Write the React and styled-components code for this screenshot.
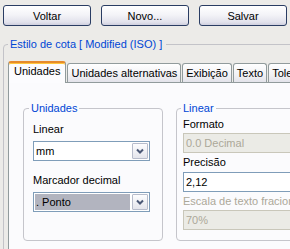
import React from 'react';
import styled, { createGlobalStyle, css } from 'styled-components';

const GlobalStyle = createGlobalStyle`
  body {
    margin: 0;
    background: #ecebe8;
    font-family: "Liberation Sans", Arial, sans-serif;
    font-size: 11px;
    line-height: 14px;
  }
`;

const Window = styled.div`
  width: 290px;
  height: 249px;
  overflow: hidden;
  background: #ecebe8;
  color: #000;
`;

const Toolbar = styled.div`
  display: flex;
  gap: 10px;
  padding: 5px 3px 0;
`;

const Button = styled.button`
  box-sizing: border-box;
  width: 88px;
  height: 21px;
  padding: 0;
  border: 1px solid #2a3d63;
  border-radius: 3px;
  background: linear-gradient(#ffffff 0%, #f4f4f8 45%, #e2e2ec 85%, #cfcfde 100%);
  font: inherit;
  color: #000;
`;

const StyleGroup = styled.fieldset`
  box-sizing: border-box;
  width: 340px;
  height: 260px;
  margin: 11px 0 0 3px;
  padding: 10px 0 0 4px;
  border: 1px solid #c3c3c8;
  border-radius: 4px;
`;

const GroupTitle = styled.legend`
  padding: 0 4px 0 2px;
  color: #0046d5;
`;

const TabStrip = styled.div`
  position: relative;
  z-index: 1;
  display: flex;
  align-items: flex-end;
  gap: 1px;
  height: 22px;
  margin-bottom: -1px;
`;

const Tab = styled.div`
  box-sizing: border-box;
  height: 19px;
  margin-bottom: 1px;
  padding: 2px 3px 0;
  border: 1px solid #919b9c;
  border-bottom: none;
  border-radius: 3px 3px 0 0;
  background: linear-gradient(#ffffff, #f1f1f4 60%, #e3e3ea);
  white-space: nowrap;

  ${p => p.$active && css`
    height: 22px;
    margin-bottom: 0;
    padding: 1px 5px 0;
    border-top: 2px solid #e68b2c;
    box-shadow: inset 0 1px 0 #ffc73c;
    background: #fcfcfe;
  `}
`;

const TabPanel = styled.div`
  display: flex;
  gap: 13px;
  height: 200px;
  padding: 18px 0 0 14px;
  border: 1px solid #919b9c;
  background: #fbfbfd;
`;

const Section = styled.fieldset`
  box-sizing: border-box;
  flex: none;
  width: ${p => p.$width}px;
  height: 140px;
  margin: 0;
  padding: 0 6px 0 ${p => p.$pad}px;
  border: 1px solid #c5c5cb;
  border-radius: 4px;
`;

const SectionTitle = styled.legend`
  padding: 0 2px;
  color: #0046d5;
`;

const Fields = styled.div`
  display: flex;
  flex-direction: column;
  padding-left: ${p => p.$indent}px;
`;

const Label = styled.div`
  margin-top: ${p => p.$top}px;
  color: ${p => (p.$disabled ? '#aca899' : '#000')};
  white-space: nowrap;
`;

const Field = styled.div`
  box-sizing: border-box;
  display: flex;
  align-items: center;
  width: ${p => p.$width}px;
  height: 20px;
  margin-top: ${p => p.$top}px;
  padding: 1px;
  border: 1px solid ${p => (p.$disabled ? '#c9c7ba' : '#7f9db9')};
  background: ${p => (p.$disabled ? '#ebebe6' : '#fff')};
  color: ${p => (p.$disabled ? '#aca899' : '#000')};
  white-space: nowrap;
`;

const Value = styled.div`
  flex: 1;
  align-self: stretch;
  display: flex;
  align-items: center;
  padding-left: 1px;
  background: ${p => (p.$selected ? '#b2b4bf' : 'transparent')};
`;

const DropButton = styled.div`
  box-sizing: border-box;
  display: flex;
  align-items: center;
  justify-content: center;
  width: 16px;
  height: 16px;
  margin-left: 2px;
  border: 1px solid #b7bccb;
  border-radius: 1px;
  background: linear-gradient(#fdfdfe, #e4e5ec);
`;

const Chevron = () => (
  <svg width="8" height="6" viewBox="0 0 8 6">
    <polyline points="1,1.5 4,4.5 7,1.5" fill="none" stroke="#4b5876" strokeWidth="2" />
  </svg>
);

const Combo = ({ value, selected, top }) => (
  <Field $width={117} $top={top}>
    <Value $selected={selected}>{value}</Value>
    <DropButton>
      <Chevron />
    </DropButton>
  </Field>
);

export default function App() {
  return (
    <Window>
      <GlobalStyle />
      <Toolbar>
        <Button>Voltar</Button>
        <Button>Novo...</Button>
        <Button>Salvar</Button>
      </Toolbar>

      <StyleGroup>
        <GroupTitle>Estilo de cota [ Modified (ISO) ]</GroupTitle>
        <TabStrip>
          <Tab $active>Unidades</Tab>
          <Tab>Unidades alternativas</Tab>
          <Tab>Exibição</Tab>
          <Tab>Texto</Tab>
          <Tab>Tolerâncias</Tab>
        </TabStrip>
        <TabPanel>
          <Section $width={140} $pad={5}>
            <SectionTitle>Unidades</SectionTitle>
            <Fields $indent={4}>
              <Label $top={7}>Linear</Label>
              <Combo value="mm" top={5} />
              <Label $top={12}>Marcador decimal</Label>
              <Combo value=". Ponto" selected top={5} />
            </Fields>
          </Section>
          <Section $width={150} $pad={4}>
            <SectionTitle>Linear</SectionTitle>
            <Fields $indent={2}>
              <Label $top={2}>Formato</Label>
              <Field $width={130} $top={2} $disabled>
                <Value>0.0 Decimal</Value>
              </Field>
              <Label $top={2}>Precisão</Label>
              <Field $width={130} $top={3}>
                <Value>2,12</Value>
              </Field>
              <Label $top={2} $disabled>Escala de texto fracionário</Label>
              <Field $width={130} $top={2} $disabled>
                <Value>70%</Value>
              </Field>
            </Fields>
          </Section>
        </TabPanel>
      </StyleGroup>
    </Window>
  );
}
